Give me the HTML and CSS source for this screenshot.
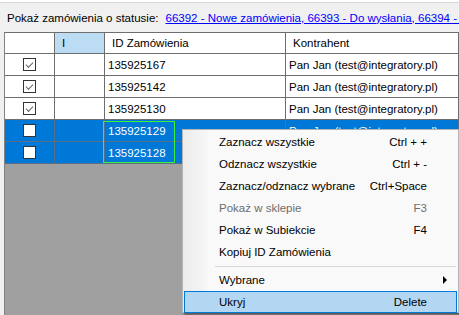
FILE: index.html
```html
<!DOCTYPE html>
<html lang="pl">
<head>
    <meta charset="UTF-8">
    <meta name="viewport" content="width=device-width, initial-scale=1.0">
    <title>Zamówienia</title>
    <link rel="stylesheet" href="styles.css">
</head>
<body>
    <div class="window">
        <div class="filter-bar">
            <span class="filter-label">Pokaż zamówienia o statusie:</span>
            <a href="#" class="status-link">66392 - Nowe zamówienia, 66393 - Do wysłania, 66394 - Wysłane</a>
        </div>

        <div class="grid">
            <div class="row head">
                <div class="cell"></div>
                <div class="cell sorted">I</div>
                <div class="cell">ID Zamówienia</div>
                <div class="cell">Kontrahent</div>
            </div>
            <div class="row">
                <div class="cell check"><span class="box checked"></span></div>
                <div class="cell"></div>
                <div class="cell">135925167</div>
                <div class="cell">Pan Jan (test@integratory.pl)</div>
            </div>
            <div class="row">
                <div class="cell check"><span class="box checked"></span></div>
                <div class="cell"></div>
                <div class="cell">135925142</div>
                <div class="cell">Pan Jan (test@integratory.pl)</div>
            </div>
            <div class="row">
                <div class="cell check"><span class="box checked"></span></div>
                <div class="cell"></div>
                <div class="cell">135925130</div>
                <div class="cell">Pan Jan (test@integratory.pl)</div>
            </div>
            <div class="row selected">
                <div class="cell check"><span class="box"></span></div>
                <div class="cell"></div>
                <div class="cell">135925129</div>
                <div class="cell">Pan Jan (test@integratory.pl)</div>
            </div>
            <div class="row selected">
                <div class="cell check"><span class="box"></span></div>
                <div class="cell"></div>
                <div class="cell">135925128</div>
                <div class="cell">Pan Jan (test@integratory.pl)</div>
            </div>
            <div class="focus-rect"></div>
        </div>

        <div class="context-menu">
            <div class="menu-item"><span>Zaznacz wszystkie</span><span class="key">Ctrl + +</span></div>
            <div class="menu-item"><span>Odznacz wszystkie</span><span class="key">Ctrl + -</span></div>
            <div class="menu-item"><span>Zaznacz/odznacz wybrane</span><span class="key">Ctrl+Space</span></div>
            <div class="menu-item disabled"><span>Pokaż w sklepie</span><span class="key">F3</span></div>
            <div class="menu-item"><span>Pokaż w Subiekcie</span><span class="key">F4</span></div>
            <div class="menu-item"><span>Kopiuj ID Zamówienia</span><span class="key"></span></div>
            <div class="menu-sep"></div>
            <div class="menu-item"><span>Wybrane</span><span class="arrow"></span></div>
            <div class="menu-item active"><span>Ukryj</span><span class="key">Delete</span></div>
        </div>
    </div>
</body>
</html>
```

FILE: styles.css
```css
body {
    margin: 0;
    font-family: "Liberation Sans", Arial, sans-serif;
    font-size: 11.5px;
    color: #000;
    background-color: #fff;
    overflow: hidden;
}
.window {
    position: relative;
    width: 459px;
    height: 315px;
    display: flex;
    flex-direction: column;
    overflow: hidden;
}
.filter-bar {
    height: 29px;
    margin-top: 2px;
    border-top: 1px solid #d9d9d9;
    background-color: #f0f0f0;
    display: flex;
    align-items: center;
    padding-left: 7px;
    white-space: nowrap;
    overflow: hidden;
}
.filter-label {
    margin-right: 7px;
}
.status-link {
    color: #0000ff;
    text-decoration: underline;
}
.grid {
    position: relative;
    flex: 1;
    background-color: #f0f0f0;
    padding-left: 4px;
}
.grid::before {
    content: "";
    position: absolute;
    left: 4px;
    top: 0;
    right: 0;
    bottom: 0;
    background-color: #a0a0a0;
    border-left: 1px solid #828282;
    border-top: 1px solid #6e6e6e;
}
.row {
    position: relative;
    display: grid;
    grid-template-columns: 50px 50px 181px 1fr;
    height: 22px;
    margin-left: 1px;
    background-color: #fff;
}
.row.head {
    height: 21px;
    margin-top: 1px;
}
.cell {
    box-sizing: border-box;
    display: flex;
    align-items: center;
    padding-left: 3px;
    border-right: 1px solid #6e6e6e;
    border-bottom: 1px solid #6e6e6e;
    white-space: nowrap;
    overflow: hidden;
}
.head .cell {
    padding-left: 7px;
}
.head .sorted {
    background-color: #bcdcf4;
}
.cell.check {
    justify-content: center;
    padding-left: 0;
}
.box {
    box-sizing: border-box;
    width: 13px;
    height: 13px;
    border: 1px solid #333;
    background-color: #fff;
    position: relative;
}
.box.checked::after {
    content: "";
    position: absolute;
    left: 3px;
    top: 1px;
    width: 6px;
    height: 3px;
    border-left: 1px solid #666;
    border-bottom: 1px solid #666;
    transform: translate(-1px, 2px) rotate(-45deg);
}
.row.selected {
    background-color: #0078d7;
    color: #fff;
}
.row.selected .cell {
    border-color: #5a6f84;
}
.focus-rect {
    position: absolute;
    left: 103px;
    top: 89px;
    width: 72px;
    height: 42px;
    box-sizing: border-box;
    border: 1px solid #3cf03c;
}
.context-menu {
    position: absolute;
    left: 182px;
    top: 129px;
    width: 277px;
    height: 184px;
    box-sizing: border-box;
    padding-top: 1px;
    border: 1px solid #b4b4b4;
    background: linear-gradient(to right, #ececec 0, #f6f6f6 24px, #f9f9f9 25px);
    box-shadow: 2px 2px 2px rgba(0, 0, 0, 0.45);
}
.menu-item {
    box-sizing: border-box;
    height: 22px;
    margin: 0 1px;
    padding: 0 29px 0 34px;
    display: flex;
    align-items: center;
    justify-content: space-between;
    border: 1px solid transparent;
}
.menu-item.disabled {
    color: #6d6d6d;
}
.menu-item.active {
    background-color: #b3d7f3;
    border-color: #0078d7;
}
.menu-sep {
    height: 6px;
    margin-left: 32px;
    margin-right: 2px;
    background: linear-gradient(#d7d7d7, #d7d7d7) 0 3px / 100% 1px no-repeat;
}
.arrow {
    width: 0;
    height: 0;
    margin-right: -20px;
    border-top: 4px solid transparent;
    border-bottom: 4px solid transparent;
    border-left: 4px solid #000;
}
```
